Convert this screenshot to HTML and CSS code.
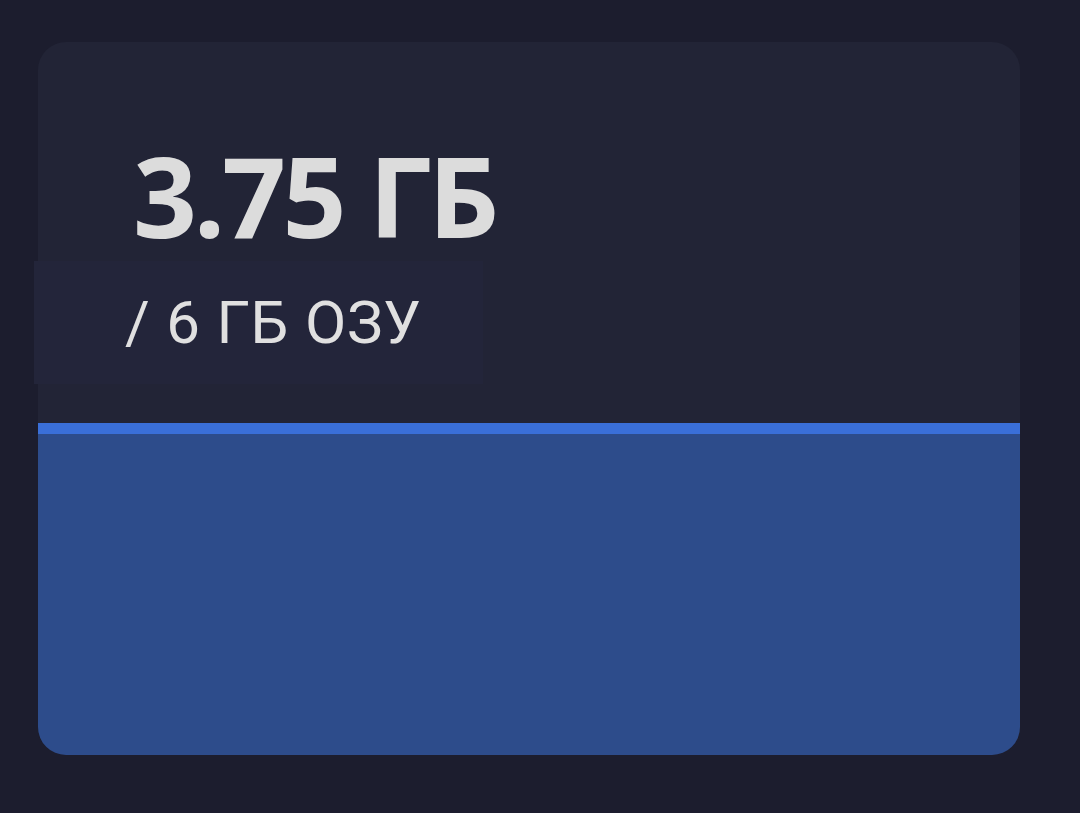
FILE: index.html
```html
<!DOCTYPE html>
<html lang="ru">
<head>
<meta charset="utf-8">
<title>ОЗУ</title>
<link rel="stylesheet" href="styles.css">
</head>
<body>
<div class="card">
  <div class="title">3.75 ГБ</div>
  <div class="sub">/ 6 ГБ ОЗУ</div>
  <div class="meter">
    <div class="meter-line"></div>
    <div class="meter-fill"></div>
  </div>
</div>
</body>
</html>
```

FILE: styles.css
```css
html, body {
  margin: 0;
  padding: 0;
}
body {
  background: #1c1d2e;
  width: 1080px;
  height: 813px;
  overflow: hidden;
  padding-top: 42px;
  padding-left: 38px;
  box-sizing: border-box;
}
.card {
  width: 982px;
  height: 713px;
  background: #222436;
  border-radius: 28px;
  padding-top: 97px;
  box-sizing: border-box;
  display: flex;
  flex-direction: column;
}
.title {
  font-family: "Open Sans", sans-serif;
  font-weight: 700;
  font-size: 112px;
  line-height: 1;
  color: #dcdcdc;
  padding-left: 95px;
  letter-spacing: -3.5px;
}
.sub {
  margin-top: 10px;
  margin-left: -4px;
  width: 449px;
  height: 123px;
  box-sizing: border-box;
  padding-top: 32px;
  padding-left: 91px;
  background: #23253a;
  font-family: Roboto, sans-serif;
  font-size: 60px;
  line-height: 1;
  color: #e0e0e0;
  letter-spacing: 0.8px;
}
.meter {
  margin-top: 39px;
  flex: 1;
  display: flex;
  flex-direction: column;
  border-radius: 0 0 28px 28px;
  overflow: hidden;
}
.meter-line {
  height: 11px;
  background: #3a6fd8;
}
.meter-fill {
  flex: 1;
  background: #2d4c8b;
}
```
